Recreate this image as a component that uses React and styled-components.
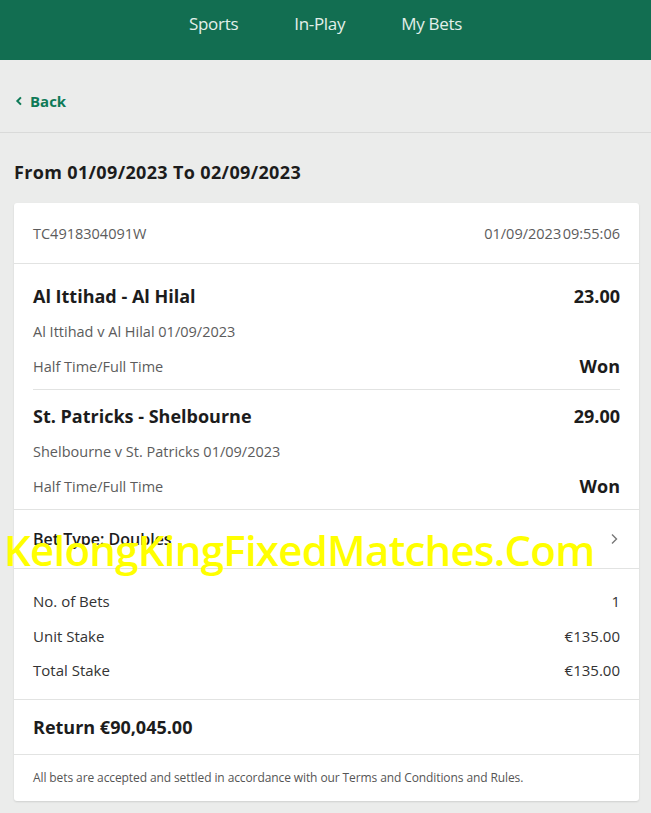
import React from "react";
import styled, { createGlobalStyle } from "styled-components";

const Global = createGlobalStyle`
  html, body { margin: 0; padding: 0; background: #ebeceb; }
  body { font-family: "Open Sans", "Noto Sans", sans-serif; color: #1f1f1f; }
  * { box-sizing: border-box; }
`;

const Page = styled.div`
  min-height: 813px;
  background: #ebeceb;
`;

const Header = styled.header`
  height: 60px;
  background: #126e51;
  display: flex;
  justify-content: center;
  align-items: center;
  gap: 56px;
  padding-bottom: 13px;
`;

const NavItem = styled.span`
  color: #e3f0ea;
  font-size: 17px;
  letter-spacing: -0.3px;
`;

const BackBar = styled.div`
  height: 73px;
  display: flex;
  align-items: center;
  padding: 10px 14px 0;
  border-bottom: 1px solid #d9dad9;
  color: #0e7a57;
  font-weight: 700;
  font-size: 15px;
  gap: 6px;
`;

const Title = styled.h1`
  margin: 0;
  padding: 27px 14px 19px;
  font-size: 18px;
  line-height: 24px;
  font-weight: 700;
  color: #1c1c1c;
  letter-spacing: 0.35px;
`;

const Card = styled.div`
  position: relative;
  margin: 0 12px 0 14px;
  background: #fff;
  border-radius: 3px;
  box-shadow: 0 1px 2px rgba(0, 0, 0, 0.12);
`;

const Section = styled.div`
  padding: ${(p) => p.$pad || "0 19px"};
  border-bottom: ${(p) => (p.$last ? "none" : "1px solid #e2e3e2")};
`;

const Row = styled.div`
  display: flex;
  justify-content: space-between;
  align-items: center;
  height: ${(p) => p.$h || 34}px;
`;

const Muted = styled.span`
  font-size: 14.5px;
  color: #5c5c5c;
`;

const Strong = styled.span`
  font-size: 18px;
  font-weight: 700;
  color: #1c1c1c;
`;

const Won = styled.span`
  font-size: 18px;
  font-weight: 700;
  color: #1c1c1c;
`;

const Selection = styled.div`
  padding: 9px 0 7px;
  border-bottom: ${(p) => (p.$divider ? "1px solid #e2e3e2" : "none")};
`;

const Regular = styled.span`
  font-size: 15px;
  color: #333;
`;

const BetType = styled.span`
  font-size: 16px;
  font-weight: 600;
  color: #1c1c1c;
`;

const Small = styled.p`
  margin: 0;
  font-size: 12px;
  line-height: 18px;
  color: #555;
  letter-spacing: -0.1px;
`;

const Watermark = styled.div`
  position: absolute;
  left: -10px;
  top: 318px;
  font-family: "Open Sans", sans-serif;
  font-weight: 600;
  font-size: 42px;
  color: #ffff00;
  letter-spacing: -0.75px;
  white-space: nowrap;
  pointer-events: none;
`;

const Chevron = ({ dir = "right", color = "#777", w = 1.4, size = 12 }) => (
  <svg width={size} height={size} viewBox="0 0 12 12">
    <path
      d={dir === "left" ? "M7.5 2.5 L4 6 L7.5 9.5" : "M4.5 2 L8.5 6 L4.5 10"}
      fill="none"
      stroke={color}
      strokeWidth={w}
      strokeLinecap="square"
    />
  </svg>
);

const selections = [
  {
    title: "Al Ittihad - Al Hilal",
    odds: "23.00",
    event: "Al Ittihad v Al Hilal 01/09/2023",
  },
  {
    title: "St. Patricks - Shelbourne",
    odds: "29.00",
    event: "Shelbourne v St. Patricks 01/09/2023",
  },
];

export default function App() {
  return (
    <Page>
      <Global />
      <Header>
        <NavItem>Sports</NavItem>
        <NavItem>In-Play</NavItem>
        <NavItem>My Bets</NavItem>
      </Header>
      <BackBar>
        <Chevron dir="left" color="#0e7a57" w={2.4} size={10} />
        Back
      </BackBar>
      <Title>From 01/09/2023 To 02/09/2023</Title>
      <Card>
        <Section>
          <Row $h={60}>
            <Muted>TC4918304091W</Muted>
            <Muted>{"01/09/2023\u200A09:55:06"}</Muted>
          </Row>
        </Section>
        <Section $pad="6px 19px 0">
          {selections.map((s, i) => (
            <Selection key={s.title} $divider={i === 0}>
              <Row $h={34}>
                <Strong>{s.title}</Strong>
                <Strong>{s.odds}</Strong>
              </Row>
              <Row $h={37}>
                <Muted>{s.event}</Muted>
              </Row>
              <Row $h={32}>
                <Muted>Half Time/Full Time</Muted>
                <Won>Won</Won>
              </Row>
            </Selection>
          ))}
        </Section>
        <Section>
          <Row $h={58}>
            <BetType>Bet Type: Doubles</BetType>
            <Chevron />
          </Row>
        </Section>
        <Section $pad="15px 19px 13px">
          <Row $h={34}>
            <Regular>No. of Bets</Regular>
            <Regular>1</Regular>
          </Row>
          <Row $h={35}>
            <Regular>Unit Stake</Regular>
            <Regular>€135.00</Regular>
          </Row>
          <Row $h={33}>
            <Regular>Total Stake</Regular>
            <Regular>€135.00</Regular>
          </Row>
        </Section>
        <Section>
          <Row $h={54}>
            <Strong>Return €90,045.00</Strong>
          </Row>
        </Section>
        <Section $last $pad="14px 19px 14px">
          <Small>
            All bets are accepted and settled in accordance with our Terms and
            Conditions and Rules.
          </Small>
        </Section>
        <Watermark>KelongKingFixedMatches.Com</Watermark>
      </Card>
    </Page>
  );
}
